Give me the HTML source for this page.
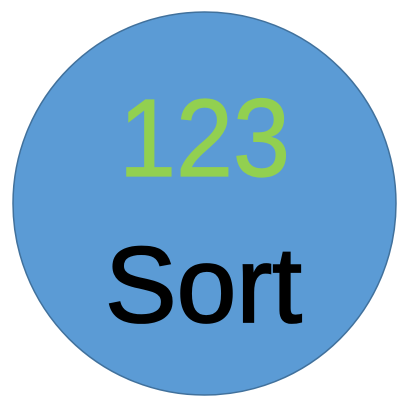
<!DOCTYPE html>
<html><head><style>html,body{margin:0;padding:0;background:#fff;}</style></head>
<body>
<svg width="410" height="410" viewBox="0 0 410 410" xmlns="http://www.w3.org/2000/svg">
<circle cx="204.5" cy="203.5" r="191.5" fill="#5b9bd5" stroke="#41719c" stroke-width="1.5"/>
<text x="119" y="176" font-family="Liberation Sans, sans-serif" font-size="110" fill="#92d050" stroke="#92d050" stroke-width="1.2" textLength="171" lengthAdjust="spacingAndGlyphs">123</text>
<text x="105" y="322" font-family="Liberation Sans, sans-serif" font-size="108" fill="#000" stroke="#000" stroke-width="1.8" textLength="197" lengthAdjust="spacingAndGlyphs">Sort</text>
</svg>
</body></html>
